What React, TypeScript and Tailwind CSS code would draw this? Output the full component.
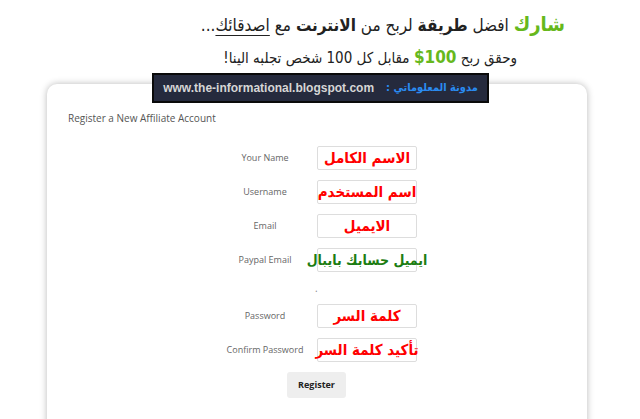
import React from 'react';

const arabic = { fontFamily: '"DejaVu Sans Condensed", "DejaVu Sans", sans-serif' };

type Field = { label: string; hint: string; color: string; size: string };

const topFields: Field[] = [
  { label: 'Your Name', hint: 'الاسم الكامل', color: 'text-[#ff0000]', size: 'text-[15px]' },
  { label: 'Username', hint: 'اسم المستخدم', color: 'text-[#ff0000]', size: 'text-[15px]' },
  { label: 'Email', hint: 'الايميل', color: 'text-[#ff0000]', size: 'text-[15px]' },
  { label: 'Paypal Email', hint: 'ايميل حسابك بايبال', color: 'text-[#1c7d12]', size: 'text-[14px]' },
];

const bottomFields: Field[] = [
  { label: 'Password', hint: 'كلمة السر', color: 'text-[#ff0000]', size: 'text-[15px]' },
  { label: 'Confirm Password', hint: 'تأكيد كلمة السر', color: 'text-[#ff0000]', size: 'text-[15px]' },
];

function FormRow({ field }: { field: Field }) {
  return (
    <div className="flex items-center gap-[2px] pl-[168px]">
      <div className="w-[100px] text-center text-[9px] text-[#666]">{field.label}</div>
      <div className="relative flex h-[24px] w-[100px] items-center justify-center rounded-[2px] border border-[#ddd] bg-white">
        <span
          dir="rtl"
          className={`whitespace-nowrap font-bold leading-none ${field.size} ${field.color}`}
          style={arabic}
        >
          {field.hint}
        </span>
      </div>
    </div>
  );
}

export default function App() {
  return (
    <div className="relative min-h-screen overflow-hidden bg-white" style={{ fontFamily: '"Open Sans", sans-serif' }}>
      <header dir="rtl" className="flex flex-col items-start pr-[75px] pt-[6px] text-[#222]" style={arabic}>
        <h1 className="text-[17px] leading-[36px] font-normal whitespace-nowrap">
          <span className="font-bold text-[#66b81c] text-[20px]">شارك</span> افضل{' '}
          <span className="font-bold">طريقة</span> لربح من{' '}
          <span className="font-bold">الانترنت</span> مع{' '}
          <span className="underline underline-offset-4">اصدقائك</span>...
        </h1>
        <p className="mr-[48px] mt-[1px] text-[15px] leading-[26px] whitespace-nowrap">
          وحقق ربح{' '}
          <bdi dir="ltr" className="font-bold text-[#66b81c] text-[17px]">
            $100
          </bdi>{' '}
          مقابل كل 100 شخص تجلبه الينا!
        </p>
      </header>

      <div className="ml-[47px] mt-[13px] h-[400px] w-[540px] rounded-[10px] bg-white pt-[26px] shadow-[0_0_7px_rgba(0,0,0,0.28)]">
        <div className="pl-[21px] text-[10px] leading-[16px] text-[#555]">Register a New Affiliate Account</div>

        <div className="mt-[20px] flex flex-col gap-[10px]">
          {topFields.map((f) => (
            <FormRow key={f.label} field={f} />
          ))}
          <div className="h-[12px] pl-[268px] text-[10px] leading-[12px] text-[#888]">.</div>
          {bottomFields.map((f) => (
            <FormRow key={f.label} field={f} />
          ))}
        </div>

        <div className="mt-[8px] pl-[240px]">
          <button className="h-[26px] w-[59px] rounded-[3px] bg-[#eeeeee] text-[9px] font-bold text-[#222]">
            Register
          </button>
        </div>
      </div>

      <div className="absolute left-[152px] top-[73px] flex h-[30px] w-[337px] items-center justify-center gap-[12px] border-2 border-[#0a0a0a] bg-[#252a3d]">
        <span className="text-[12px] font-bold text-[#d6d6d6]" style={{ fontFamily: '"Liberation Sans", sans-serif' }}>
          www.the-informational.blogspot.com
        </span>
        <span dir="rtl" className="whitespace-nowrap text-[11px] font-bold text-[#2a8cf2]" style={arabic}>
          مدونة المعلوماتي :
        </span>
      </div>
    </div>
  );
}
